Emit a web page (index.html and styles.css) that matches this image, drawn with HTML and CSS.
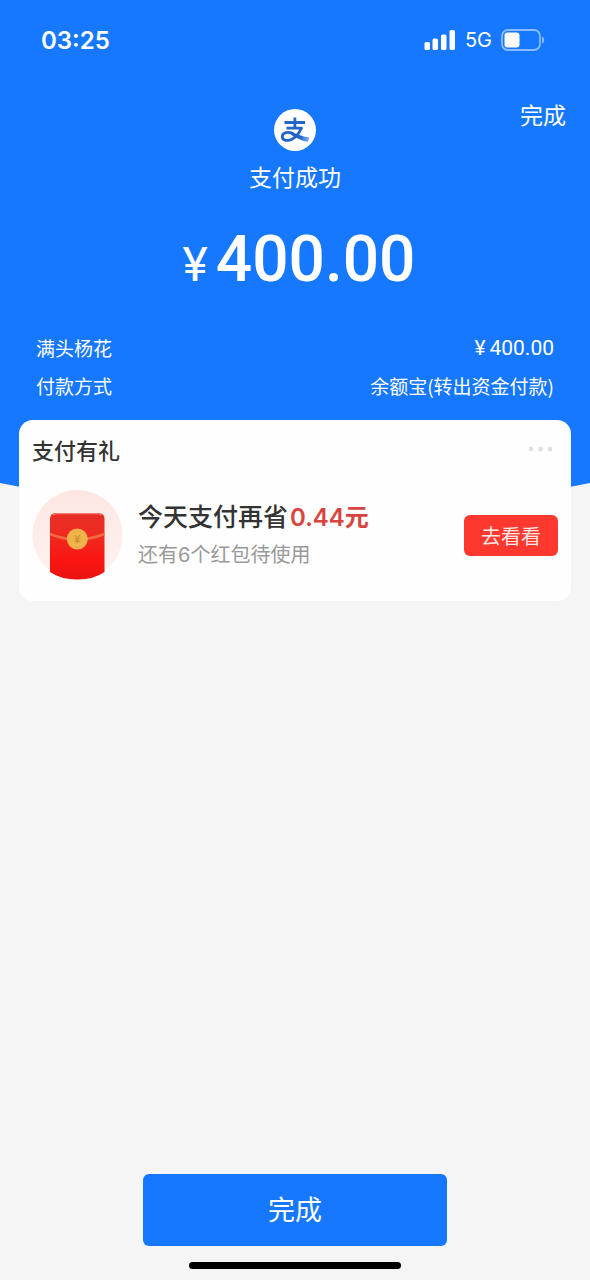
FILE: index.html
```html
<!DOCTYPE html>
<html lang="zh-CN">
<head>
<meta charset="utf-8">
<meta name="viewport" content="width=device-width, initial-scale=1">
<title>支付成功</title>
<link rel="stylesheet" href="styles.css">
</head>
<body>
<div class="page">
  <header class="hero">
    <div class="status">
      <span class="status-time">03:25</span>
      <div class="status-icons">
        <svg class="signal" width="32" height="20" viewBox="0 0 32 20" fill="#fff" aria-hidden="true">
          <rect x="0.500" y="12" width="5.500" height="8" rx="1.6"/>
          <rect x="8.500" y="8.500" width="5.500" height="11.500" rx="1.6"/>
          <rect x="17" y="4.500" width="5.500" height="15.500" rx="1.6"/>
          <rect x="25.500" y="0" width="5.500" height="20" rx="1.6"/>
        </svg>
        <span class="status-net">5G</span>
        <svg class="battery" width="44" height="22" viewBox="0 0 44 22" aria-hidden="true">
          <rect x="1" y="1" width="38" height="20" rx="6" fill="none" stroke="#fff" stroke-opacity=".5" stroke-width="1.8"/>
          <rect x="3.500" y="3.500" width="15" height="15" rx="3" fill="#fff"/>
          <path d="M41 7.500c3 1 3 6 0 7z" fill="#fff" fill-opacity=".5"/>
        </svg>
      </div>
    </div>
    <div class="topbar"><button class="done-link" type="button">完成</button></div>
    <div class="result">
      <svg class="logo" width="42" height="42" viewBox="0 0 42 42" aria-hidden="true">
        <defs>
          <linearGradient id="tail" x1="0" y1="0" x2="1" y2="0">
            <stop offset="0" stop-color="#2360c4"/><stop offset=".5" stop-color="#1f63cf"/><stop offset="1" stop-color="#86b4f5"/>
          </linearGradient>
        </defs>
        <circle cx="21" cy="21" r="21" fill="#fff"/>
        <g fill="none" stroke="#2464c8" stroke-width="2.800">
          <path d="M10.500 13.500H31M20.900 8.500V19.500M12.500 19.200H28.500"/>
          <path d="M27.500 18.500C25.500 24 22 28 18 30.200C13 32.600 8 31 8.300 27.300C8.600 23 14.500 22.500 19.500 24.700"/>
        </g>
        <path d="M18 23C23 25 29 28 35.300 28.300L34 32.800C28.500 32.500 23 28.800 17 26z" fill="url(#tail)"/>
      </svg>
      <h1 class="title">支付成功</h1>
      <p class="amount"><span class="currency">¥</span><span class="number">400.00</span></p>
    </div>
    <dl class="details">
      <div class="detail"><dt>满头杨花</dt><dd class="sum"><span>¥</span><span>400.00</span></dd></div>
      <div class="detail"><dt>付款方式</dt><dd>余额宝(转出资金付款)</dd></div>
    </dl>
  </header>
  <svg class="curve" viewBox="0 0 590 31" preserveAspectRatio="none" aria-hidden="true"><path d="M0 0Q295 62 590 0z" fill="#1677ff"/></svg>

  <main class="main">
    <section class="card">
      <div class="card-head">
        <h2 class="card-title">支付有礼</h2>
        <button class="more" type="button" aria-label="更多">
          <svg width="26" height="6" viewBox="0 0 26 6" fill="#dedee0"><circle cx="3" cy="3" r="2.300"/><circle cx="12.500" cy="3" r="2.300"/><circle cx="22" cy="3" r="2.300"/></svg>
        </button>
      </div>
      <div class="offer">
        <svg class="packet" width="92" height="92" viewBox="0 0 92 92" aria-hidden="true">
          <defs>
            <linearGradient id="halo" x1="0" y1="0" x2="0" y2="1"><stop offset="0" stop-color="#fde6e2"/><stop offset="1" stop-color="#fef3f1"/></linearGradient>
            <linearGradient id="red" x1="0" y1="0" x2="0" y2="1"><stop offset="0" stop-color="#e62f26"/><stop offset=".35" stop-color="#ee2a20"/><stop offset=".7" stop-color="#fb1510"/><stop offset="1" stop-color="#e91410"/></linearGradient>
            <radialGradient id="coin"><stop offset="0" stop-color="#e9a93c"/><stop offset=".6" stop-color="#f0b54c"/><stop offset="1" stop-color="#f3ad49"/></radialGradient>
          </defs>
          <circle cx="45.500" cy="46" r="45" fill="url(#halo)"/>
          <path d="M18 30q0-6 6-6H66.500q6 0 6 6V83Q62 90.500 45.300 90.500T18 83z" fill="url(#red)"/>
          <path d="M21 26Q23.500 24.600 26 24.700H65Q67.500 24.600 69.500 26" fill="none" stroke="#f5786a" stroke-width="1.300"/>
          <path d="M18 45Q45 56 72.500 45" fill="none" stroke="#f46a43" stroke-width="2.500"/>
          <circle cx="45.300" cy="50" r="10.500" fill="url(#coin)"/>
          <path d="M42.800 46L45.300 49.500L47.800 46M45.300 49.500V54.500M43 50H47.600M43 52.300H47.600" fill="none" stroke="#c98d2f" stroke-width="1"/>
        </svg>
        <div class="offer-text">
          <p class="offer-title">今天支付再省<strong class="saving">0.44元</strong></p>
          <p class="offer-note">还有6个红包待使用</p>
        </div>
        <button class="look" type="button">去看看</button>
      </div>
    </section>
  </main>

  <footer class="footer">
    <button class="finish" type="button">完成</button>
    <div class="home-bar"></div>
  </footer>
</div>
</body>
</html>
```
FILE: styles.css
```css
* { box-sizing: border-box; }
body, h1, h2, p, dl, dd { margin: 0; }
body {
  background: #f5f5f5;
  font-family: "Noto Sans CJK SC", sans-serif;
  color: #333;
}
button {
  border: 0;
  padding: 0;
  background: none;
  font: inherit;
  color: inherit;
  cursor: pointer;
}
svg { display: block; }

.page {
  min-height: 100vh;
  display: flex;
  flex-direction: column;
}

.hero {
  background: #1677ff;
  color: #fff;
  padding-bottom: 82px;
}
.status {
  height: 80px;
  padding: 0 45px 0 41px;
  display: flex;
  align-items: center;
  justify-content: space-between;
  font-family: Inter, sans-serif;
}
.status-time { font-size: 24px; font-weight: 600; }
.status-icons {
  display: flex;
  align-items: center;
  gap: 9px;
}
.status-net { font-size: 20px; }

.topbar {
  display: flex;
  justify-content: flex-end;
  padding: 18px 24px 0;
}
.done-link { font-size: 23px; line-height: 32px; }

.result {
  display: flex;
  flex-direction: column;
  align-items: center;
  margin-top: -21px;
}
.title {
  margin-top: 9px;
  font-size: 23px;
  font-weight: 400;
  line-height: 32px;
}
.amount {
  display: flex;
  align-items: baseline;
  gap: 8px;
  margin-top: 28px;
  padding-left: 8px;
  font-family: Roboto, sans-serif;
  line-height: 80px;
}
.currency { font-size: 48px; }
.number { font-size: 64px; font-weight: 500; }

.details {
  display: grid;
  gap: 8px;
  margin-top: 28px;
  padding: 0 36px;
}
.detail {
  display: flex;
  justify-content: space-between;
  line-height: 30px;
  font-size: 19px;
}
.detail .sum {
  display: flex;
  gap: 4px;
  font-family: Roboto, sans-serif;
  font-size: 21px;
}

.curve { width: 100%; height: 31px; }

.main {
  position: relative;
  flex: 1;
  margin-top: -94px;
  padding: 0 19px;
}
.card {
  background: #fefefe;
  border-radius: 14px;
  padding: 13px 13px 20px;
}
.card-head {
  display: flex;
  align-items: center;
  justify-content: space-between;
}
.card-title {
  font-size: 22px;
  font-weight: 500;
  line-height: 32px;
}
.more { padding: 8px 4px; }
.offer {
  display: flex;
  align-items: center;
  gap: 14px;
  margin-top: 24px;
}
.offer-text { flex: 1; }
.offer-title {
  display: flex;
  align-items: baseline;
  gap: 2px;
  font-size: 25px;
  font-weight: 500;
  line-height: 36px;
}
.saving {
  color: #d8433f;
  font-family: Inter, "Noto Sans CJK SC", sans-serif;
  font-size: 24px;
  font-weight: 600;
}
.offer-note {
  color: #999;
  font-family: Inter, "Noto Sans CJK SC", sans-serif;
  font-size: 20px;
  line-height: 38px;
}
.look {
  width: 94px;
  height: 41px;
  border-radius: 6px;
  background: #fd382e;
  color: #ffe6e3;
  font-size: 20px;
}

.footer {
  display: flex;
  flex-direction: column;
  align-items: center;
  padding-bottom: 11px;
}
.finish {
  width: 304px;
  height: 72px;
  padding-bottom: 4px;
  border-radius: 6px;
  background: #1677ff;
  color: #fff;
  font-size: 27px;
}
.home-bar {
  width: 212px;
  height: 7px;
  margin-top: 16px;
  border-radius: 4px;
  background: #000;
}
```
